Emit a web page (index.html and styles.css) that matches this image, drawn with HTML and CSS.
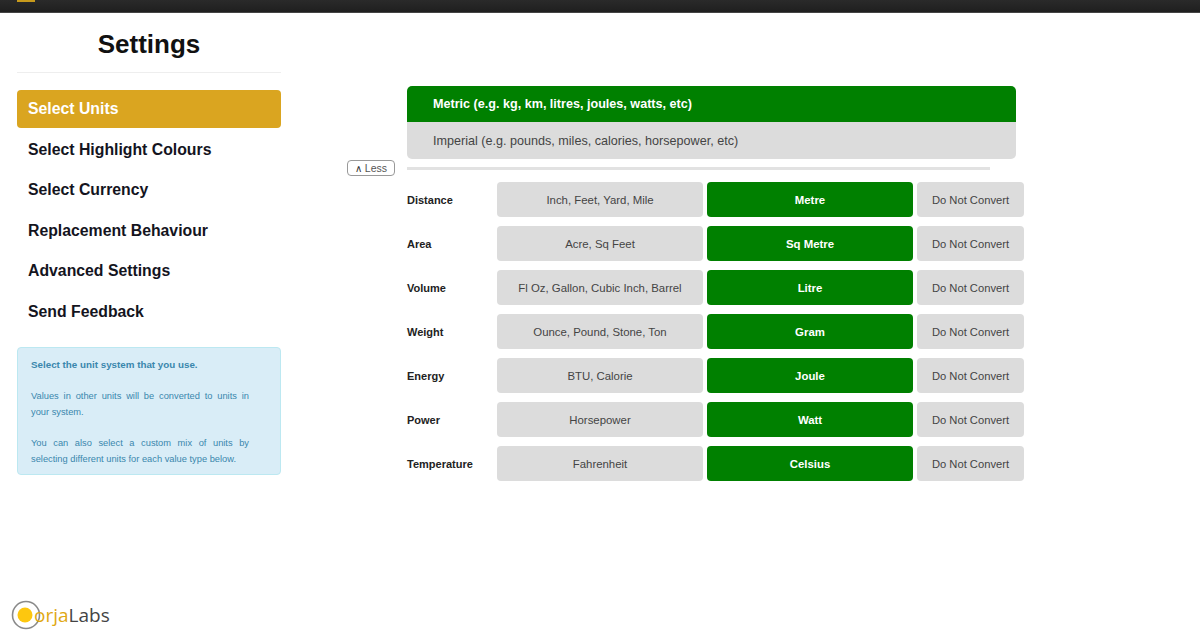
FILE: index.html
```html
<!DOCTYPE html>
<html lang="en">
<head>
<meta charset="utf-8">
<title>Settings</title>
<link rel="stylesheet" href="styles.css">
</head>
<body>
<header class="topbar"><span class="topbar-icon"></span></header>
<div class="page">
  <aside class="sidebar">
    <h1 class="title">Settings</h1>
    <nav class="menu">
      <a class="menu-item active">Select Units</a>
      <a class="menu-item">Select Highlight Colours</a>
      <a class="menu-item">Select Currency</a>
      <a class="menu-item">Replacement Behaviour</a>
      <a class="menu-item">Advanced Settings</a>
      <a class="menu-item">Send Feedback</a>
    </nav>
    <div class="info">
      <p class="info-lead">Select the unit system that you use.</p>
      <p>Values in other units will be converted to units in your system.</p>
      <p>You can also select a custom mix of units by selecting different units for each value type below.</p>
    </div>
  </aside>
  <main class="main">
    <div class="systems">
      <div class="system selected">Metric (e.g. kg, km, litres, joules, watts, etc)</div>
      <div class="system">Imperial (e.g. pounds, miles, calories, horsepower, etc)</div>
    </div>
    <div class="less-row">
      <button class="less"><span class="caret">∧</span> Less</button>
      <div class="rule"></div>
    </div>
    <div class="rows">
      <div class="row"><span class="label">Distance</span><span class="opt">Inch, Feet, Yard, Mile</span><span class="opt on">Metre</span><span class="opt none">Do Not Convert</span></div>
      <div class="row"><span class="label">Area</span><span class="opt">Acre, Sq Feet</span><span class="opt on">Sq Metre</span><span class="opt none">Do Not Convert</span></div>
      <div class="row"><span class="label">Volume</span><span class="opt">Fl Oz, Gallon, Cubic Inch, Barrel</span><span class="opt on">Litre</span><span class="opt none">Do Not Convert</span></div>
      <div class="row"><span class="label">Weight</span><span class="opt">Ounce, Pound, Stone, Ton</span><span class="opt on">Gram</span><span class="opt none">Do Not Convert</span></div>
      <div class="row"><span class="label">Energy</span><span class="opt">BTU, Calorie</span><span class="opt on">Joule</span><span class="opt none">Do Not Convert</span></div>
      <div class="row"><span class="label">Power</span><span class="opt">Horsepower</span><span class="opt on">Watt</span><span class="opt none">Do Not Convert</span></div>
      <div class="row"><span class="label">Temperature</span><span class="opt">Fahrenheit</span><span class="opt on">Celsius</span><span class="opt none">Do Not Convert</span></div>
    </div>
  </main>
</div>
<footer class="logo">
  <svg class="logo-mark" width="30" height="30" viewBox="0 0 30 30" aria-hidden="true">
    <circle cx="15" cy="15" r="13.5" fill="#fff" stroke="#8a8a8a" stroke-width="1.6"/>
    <circle cx="14" cy="15" r="7.5" fill="#fdc70f"/>
  </svg>
  <span class="logo-text"><span class="logo-gold">orja</span>Labs</span>
</footer>
</body>
</html>
```
FILE: styles.css
```css
* { box-sizing: border-box; }
html, body { margin: 0; height: 100%; }
body {
  width: 1200px;
  height: 630px;
  overflow: hidden;
  position: relative;
  background: #fff;
  color: #111;
  font-family: "Liberation Sans", Arial, sans-serif;
}
.topbar {
  height: 13px;
  background: linear-gradient(#2a2a2a, #1f1f1f);
  border-bottom: 1px solid #444;
  padding-left: 17px;
}
.topbar-icon {
  display: block;
  width: 18px;
  height: 2px;
  background: #c79a1c;
}
.page { display: flex; padding-left: 17px; }
.sidebar { width: 264px; flex: none; }
.title {
  margin: 0;
  height: 60px;
  border-bottom: 1px solid #eee;
  padding-top: 15px;
  font-size: 26px;
  line-height: 32px;
  font-weight: 700;
  text-align: center;
}
.menu { display: flex; flex-direction: column; gap: 3px; margin-top: 17px; }
.menu-item {
  height: 37.4px;
  padding-left: 11px;
  font-size: 15.8px;
  font-weight: 700;
  line-height: 37px;
  border-radius: 4px;
  color: #14141e;
}
.menu-item.active { background: #daa520; color: #fff; height: 38px; }
.info {
  margin-top: 17px;
  height: 128px;
  padding: 9px 31px 0 13px;
  background: #d9edf7;
  border: 1px solid #bce8f1;
  border-radius: 4px;
  color: #3a87ad;
  font-size: 9.3px;
  line-height: 15.8px;
  text-align: justify;
}
.info p { margin: 0 0 16px; }
.info-lead { font-weight: 700; font-size: 9.8px; }
.main { margin-left: 66px; margin-top: 73px; width: 680px; }
.systems {
  margin-left: 60px;
  width: 609px;
  border-radius: 5px;
  overflow: hidden;
}
.system {
  height: 37px;
  padding-left: 26px;
  background: #dcdcdc;
  color: #444;
  font-size: 12.6px;
  line-height: 38px;
}
.system.selected { background: #008000; color: #fff; font-weight: 700; height: 36px; line-height: 36px; }
.less-row { display: flex; align-items: center; gap: 12px; margin-top: 1px; }
.less {
  width: 48px;
  height: 16px;
  padding: 0;
  background: #fff;
  border: 1px solid #999;
  border-radius: 4px;
  color: #555;
  font: 10.5px/14px "Liberation Sans", Arial, sans-serif;
}
.caret { font-size: 10px; color: #333; }
.rule { width: 583px; height: 3px; background: #e2e2e2; }
.rows { display: flex; flex-direction: column; gap: 9px; margin: 6px 0 0 60px; }
.row {
  display: grid;
  grid-template-columns: 86px 206px 206px 107px;
  column-gap: 4px;
  height: 35px;
  align-items: stretch;
  font-size: 11.4px;
  line-height: 34px;
}
.label { font-weight: 700; color: #222; font-size: 11px; white-space: nowrap; padding-top: 1px; }
.opt {
  background: #dcdcdc;
  border-radius: 4px;
  color: #444;
  text-align: center;
  white-space: nowrap;
  padding-top: 1px;
}
.opt.on { background: #008000; color: #fff; font-weight: 700; }
.opt.none { font-size: 11.2px; }
.logo {
  position: absolute;
  left: 11px;
  bottom: 0;
  display: flex;
  align-items: center;
  height: 30px;
}
.logo-mark { flex: none; }
.logo-text {
  margin-left: -7px;
  font-family: "Open Sans", sans-serif;
  font-size: 19px;
  line-height: 28px;
  color: #444;
}
.logo-gold { color: #e0a812; }
```
